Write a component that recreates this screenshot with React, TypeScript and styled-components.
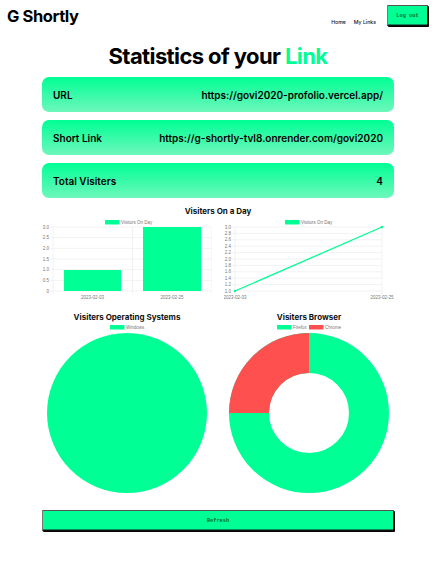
import { createGlobalStyle, styled } from 'styled-components';

const GREEN = '#00ff95';
const RED = '#ff5050';
const GRID = '#ececec';
const TICK = '#777';

const GlobalStyle = createGlobalStyle`
  html, body {
    margin: 0;
    padding: 0;
    background: #fff;
    font-family: Inter, "Liberation Sans", sans-serif;
    color: #000;
  }
`;

const Page = styled.div`
  width: 441px;
  height: 564px;
  overflow: hidden;
`;

const Header = styled.header`
  display: flex;
  justify-content: space-between;
  align-items: flex-start;
  padding: 5px 13px 0 7px;
  height: 36px;
  box-sizing: border-box;
`;

const Logo = styled.h1`
  margin: 0;
  padding-top: 1px;
  font-size: 16.5px;
  line-height: 20px;
  font-weight: 700;
  letter-spacing: -0.4px;
`;

const Nav = styled.nav`
  display: flex;
  align-items: flex-start;
`;

const NavLink = styled.a`
  font-size: 5.2px;
  line-height: 7px;
  font-weight: 500;
  margin-top: 14px;
  margin-right: 8px;
  color: #111;
`;

const PixelButton = styled.button`
  display: block;
  box-sizing: border-box;
  padding: 0;
  background: ${GREEN};
  color: #063;
  border: 1px solid #111;
  border-top-color: #555;
  border-left-color: #777;
  border-radius: 1px;
  box-shadow: inset 0 -1px 0 #0b8a5a, 1px 1px 0 #000;
  font-family: "Liberation Mono", monospace;
  font-size: 5.3px;
  font-weight: 700;
`;

const LogOutButton = styled(PixelButton)`
  width: 41px;
  height: 21px;
  margin-left: 3px;
`;

const Main = styled.main`
  width: 352px;
  margin-left: 42px;
`;

const Title = styled.h2`
  margin: 5px 0 6px;
  height: 30px;
  font-size: 22px;
  line-height: 30px;
  font-weight: 700;
  text-align: center;
  letter-spacing: -0.6px;
`;

const Accent = styled.span`
  color: ${GREEN};
`;

const Cards = styled.div`
  display: flex;
  flex-direction: column;
  gap: 8px;
`;

const Card = styled.div`
  display: flex;
  justify-content: space-between;
  align-items: center;
  height: 35px;
  padding: 0 11px;
  border-radius: 7px;
  background: linear-gradient(180deg, ${GREEN} 0%, #6ef7bb 100%);
  font-size: 10px;
  font-weight: 600;
`;

const SectionTitle = styled.h3`
  margin: 0 0 2px;
  font-size: 8px;
  line-height: 12px;
  font-weight: 700;
  text-align: center;
  color: #111;
`;

const OnADay = styled(SectionTitle)`
  margin-top: 7px;
`;

const ChartGrid = styled.div`
  display: grid;
  grid-template-columns: 170px 170px;
  column-gap: 12px;
`;

const ChartSvg = styled.svg`
  display: block;
`;

const PieColumn = styled.div`
  margin-top: 6px;
`;

const RefreshButton = styled(PixelButton)`
  width: 100%;
  height: 21px;
  margin-top: 15px;
`;

const ChartLabel = styled.text`
  font-family: "Liberation Sans", sans-serif;
  font-size: 4.5px;
  fill: ${TICK};
`;

const BAR_TICKS = ['3.0', '2.5', '2.0', '1.5', '1.0', '0.5', '0'];
const LINE_TICKS = ['3.0', '2.8', '2.6', '2.4', '2.2', '2.0', '1.8', '1.6', '1.4', '1.2', '1.0'];
const TOP = 8;
const BOTTOM = 72;
const LABEL_Y = 79.5;

function Legend({ x, y = 0, color, label }: { x: number; y?: number; color: string; label: string }) {
  return (
    <>
      <rect x={x} y={y} width={14.5} height={4.5} fill={color} />
      <ChartLabel x={x + 16} y={y + 4}>{label}</ChartLabel>
    </>
  );
}

function YGrid({ ticks, left, right }: { ticks: string[]; left: number; right: number }) {
  return (
    <>
      {ticks.map((tick, i) => {
        const y = TOP + ((BOTTOM - TOP) * i) / (ticks.length - 1);
        return (
          <g key={tick}>
            <line x1={left - 3} x2={right} y1={y} y2={y} stroke={GRID} strokeWidth={0.7} />
            <ChartLabel x={left - 4} y={y + 1.5} textAnchor="end">{tick}</ChartLabel>
          </g>
        );
      })}
    </>
  );
}

function BarChart() {
  return (
    <ChartSvg width={170} height={86} viewBox="0 0 170 86">
      <Legend x={63} y={1} color={GREEN} label="Visitors On Day" />
      <YGrid ticks={BAR_TICKS} left={11} right={170} />
      {[11, 90.5, 170].map((x) => (
        <line key={x} x1={x} x2={x} y1={TOP} y2={BOTTOM + 3} stroke={GRID} strokeWidth={0.7} />
      ))}
      <rect x={22} y={51} width={57} height={21} fill={GREEN} />
      <rect x={101} y={TOP} width={58} height={64} fill={GREEN} />
      <ChartLabel x={50.5} y={LABEL_Y} textAnchor="middle">2023-02-03</ChartLabel>
      <ChartLabel x={130} y={LABEL_Y} textAnchor="middle">2023-02-25</ChartLabel>
    </ChartSvg>
  );
}

function LineChart() {
  return (
    <ChartSvg width={170} height={86} viewBox="0 0 170 86">
      <Legend x={61} y={1} color={GREEN} label="Visitors On Day" />
      <YGrid ticks={LINE_TICKS} left={11} right={158} />
      {[11, 158].map((x) => (
        <line key={x} x1={x} x2={x} y1={TOP} y2={BOTTOM + 3} stroke={GRID} strokeWidth={0.7} />
      ))}
      <line x1={11} y1={BOTTOM} x2={158} y2={TOP} stroke={GREEN} strokeWidth={1.3} />
      <circle cx={11} cy={BOTTOM} r={1.2} fill={GREEN} />
      <circle cx={158} cy={TOP} r={1.2} fill={GREEN} />
      <ChartLabel x={11} y={LABEL_Y} textAnchor="middle">2023-02-03</ChartLabel>
      <ChartLabel x={158} y={LABEL_Y} textAnchor="middle">2023-02-25</ChartLabel>
    </ChartSvg>
  );
}

function PieChart() {
  return (
    <ChartSvg width={170} height={170} viewBox="0 0 170 170">
      <Legend x={68} color={GREEN} label="Windows" />
      <circle cx={85} cy={88} r={80} fill={GREEN} />
    </ChartSvg>
  );
}

function DoughnutChart() {
  return (
    <ChartSvg width={170} height={170} viewBox="0 0 170 170">
      <Legend x={53} color={GREEN} label="Firefox" />
      <Legend x={85} color={RED} label="Chrome" />
      <circle cx={85} cy={88} r={60} fill="none" stroke={GREEN} strokeWidth={40} />
      <path d="M5 88 A80 80 0 0 1 85 8 L85 48 A40 40 0 0 0 45 88 Z" fill={RED} />
    </ChartSvg>
  );
}

export default function App() {
  return (
    <Page>
      <GlobalStyle />
      <Header>
        <Logo>G Shortly</Logo>
        <Nav>
          <NavLink>Home</NavLink>
          <NavLink>My Links</NavLink>
          <LogOutButton>Log out</LogOutButton>
        </Nav>
      </Header>
      <Main>
        <Title>
          Statistics of your <Accent>Link</Accent>
        </Title>
        <Cards>
          <Card><span>URL</span><span>https://govi2020-profolio.vercel.app/</span></Card>
          <Card><span>Short Link</span><span>https://g-shortly-tvl8.onrender.com/govi2020</span></Card>
          <Card><span>Total Visiters</span><span>4</span></Card>
        </Cards>
        <OnADay>Visiters On a Day</OnADay>
        <ChartGrid>
          <BarChart />
          <LineChart />
          <PieColumn>
            <SectionTitle>Visiters Operating Systems</SectionTitle>
            <PieChart />
          </PieColumn>
          <PieColumn>
            <SectionTitle>Visiters Browser</SectionTitle>
            <DoughnutChart />
          </PieColumn>
        </ChartGrid>
        <RefreshButton>Refresh</RefreshButton>
      </Main>
    </Page>
  );
}
